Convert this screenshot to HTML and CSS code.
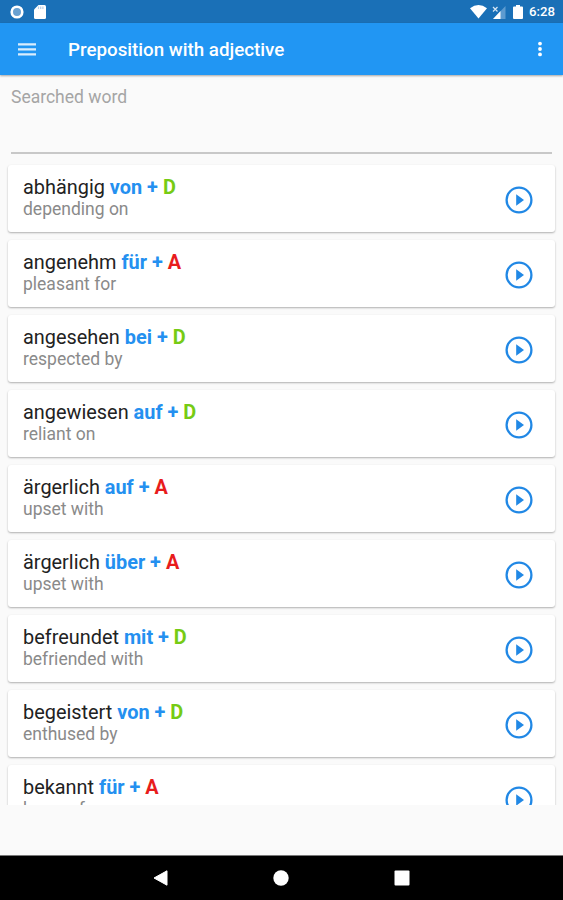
FILE: index.html
```html
<!DOCTYPE html>
<html lang="en">
  <head>
    <meta charset="UTF-8" />
    <meta name="viewport" content="width=device-width, initial-scale=1.0" />
    <title>Preposition with adjective</title>
    <link rel="stylesheet" href="styles.css" />
  </head>
  <body>
    <svg class="defs">
      <symbol id="play" viewBox="0 0 28 28">
        <circle cx="14" cy="14" r="12.4" fill="none" stroke="currentColor" stroke-width="2.3" />
        <path d="M11.2 8.3v11.4l7.8-5.7z" fill="currentColor" />
      </symbol>
    </svg>

    <!-- Status bar -->
    <div class="status-bar">
      <svg width="14" height="14" viewBox="0 0 14 14">
        <circle cx="7" cy="7" r="5.3" fill="#69a1d1" stroke="#fff" stroke-width="2.6" />
      </svg>
      <svg class="sd-card" width="12" height="14" viewBox="0 0 12 14">
        <path d="M4.5 0H10.5Q12 0 12 1.5V12.5Q12 14 10.5 14H1.5Q0 14 0 12.5V4.5z" fill="#fff" />
        <path d="M4.5 1.5v2.5M6.7 1.5v2.5M8.9 1.5v2.5" stroke="#b9cfe8" stroke-width="1.2" />
      </svg>
      <div class="status-right">
        <svg width="17" height="14" viewBox="0 0 17 14">
          <path d="M0 3.2Q8.5-3 17 3.2L8.5 13.5z" fill="#fff" />
        </svg>
        <svg class="signal" width="14" height="13" viewBox="0 0 14 13">
          <path d="M13.5 0v13H1z" fill="#5d9bd0" />
          <path d="M8.5 5v8H1z" fill="#fff" />
          <path d="M1 1l4.5 4.5M5.5 1L1 5.5" stroke="#d5e5f3" stroke-width="1.2" />
        </svg>
        <svg class="battery" width="10" height="14" viewBox="0 0 10 14">
          <path d="M3 0h4v1.5h2q1 0 1 1V13q0 1-1 1H1q-1 0-1-1V2.5q0-1 1-1h2z" fill="#fff" />
        </svg>
        <span class="time">6:28</span>
      </div>
    </div>

    <!-- App bar -->
    <div class="app-bar">
      <svg width="18" height="13" viewBox="0 0 18 13">
        <path d="M0 1.4h18M0 6.4h18M0 11.4h18" stroke="#d9edfd" stroke-width="2.3" />
      </svg>
      <h1>Preposition with adjective</h1>
      <svg class="more" width="4" height="16" viewBox="0 0 4 16">
        <g fill="#fff">
          <circle cx="2" cy="2.6" r="1.9" />
          <circle cx="2" cy="8" r="1.9" />
          <circle cx="2" cy="13.4" r="1.9" />
        </g>
      </svg>
    </div>

    <!-- Search -->
    <div class="search">Searched word</div>

    <!-- Words -->
    <div class="list">
      <div class="card">
        <div>
          <div class="word">abhängig <b>von + <span class="dativ">D</span></b></div>
          <div class="meaning">depending on</div>
        </div>
        <svg class="play"><use href="#play" /></svg>
      </div>
      <div class="card">
        <div>
          <div class="word">angenehm <b>für + <span class="akkusativ">A</span></b></div>
          <div class="meaning">pleasant for</div>
        </div>
        <svg class="play"><use href="#play" /></svg>
      </div>
      <div class="card">
        <div>
          <div class="word">angesehen <b>bei + <span class="dativ">D</span></b></div>
          <div class="meaning">respected by</div>
        </div>
        <svg class="play"><use href="#play" /></svg>
      </div>
      <div class="card">
        <div>
          <div class="word">angewiesen <b>auf + <span class="dativ">D</span></b></div>
          <div class="meaning">reliant on</div>
        </div>
        <svg class="play"><use href="#play" /></svg>
      </div>
      <div class="card">
        <div>
          <div class="word">ärgerlich <b>auf + <span class="akkusativ">A</span></b></div>
          <div class="meaning">upset with</div>
        </div>
        <svg class="play"><use href="#play" /></svg>
      </div>
      <div class="card">
        <div>
          <div class="word">ärgerlich <b>über + <span class="akkusativ">A</span></b></div>
          <div class="meaning">upset with</div>
        </div>
        <svg class="play"><use href="#play" /></svg>
      </div>
      <div class="card">
        <div>
          <div class="word">befreundet <b>mit + <span class="dativ">D</span></b></div>
          <div class="meaning">befriended with</div>
        </div>
        <svg class="play"><use href="#play" /></svg>
      </div>
      <div class="card">
        <div>
          <div class="word">begeistert <b>von + <span class="dativ">D</span></b></div>
          <div class="meaning">enthused by</div>
        </div>
        <svg class="play"><use href="#play" /></svg>
      </div>
      <div class="card">
        <div>
          <div class="word">bekannt <b>für + <span class="akkusativ">A</span></b></div>
          <div class="meaning">known for</div>
        </div>
        <svg class="play"><use href="#play" /></svg>
      </div>
    </div>

    <!-- Navigation bar -->
    <div class="nav-bar">
      <svg width="15" height="16" viewBox="0 0 15 16">
        <path d="M14 .8v14.4L1 8z" fill="#fff" stroke="#fff" stroke-linejoin="round" />
      </svg>
      <svg width="16" height="16" viewBox="0 0 16 16">
        <circle cx="8" cy="8" r="7.7" fill="#fff" />
      </svg>
      <svg width="16" height="16" viewBox="0 0 16 16">
        <rect x=".5" y=".5" width="15" height="15" rx="1" fill="#fff" />
      </svg>
    </div>
  </body>
</html>
```

FILE: styles.css
```css
* {
  box-sizing: border-box;
}

body {
  margin: 0;
  height: 900px;
  display: flex;
  flex-direction: column;
  overflow: hidden;
  font-family: Roboto, sans-serif;
  background: #fafafa;
}

svg {
  display: block;
  flex: none;
}

.defs {
  display: none;
}

.status-bar {
  height: 23px;
  flex: none;
  display: flex;
  align-items: center;
  padding: 1px 8px 0 10px;
  background: #1a70b7;
  color: #fff;
}

.sd-card {
  margin-left: 10px;
}

.status-right {
  margin-left: auto;
  display: flex;
  align-items: center;
}

.signal {
  margin-left: 5px;
}

.battery {
  margin-left: 7px;
}

.time {
  margin-left: 6px;
  font-size: 13.2px;
  font-weight: 500;
  line-height: 16px;
}

.app-bar {
  height: 52px;
  flex: none;
  display: flex;
  align-items: center;
  padding: 0 21px 0 18px;
  background: #2196f3;
  color: #fff;
  box-shadow: 0 1px 2px rgba(0, 0, 0, 0.35);
}

.app-bar h1 {
  margin: 0 0 0 32px;
  padding-top: 2px;
  font-size: 18.75px;
  font-weight: 500;
}

.app-bar .more {
  margin-left: auto;
}

.search {
  height: 79px;
  flex: none;
  margin: 0 11px;
  padding-top: 12px;
  border-bottom: 2px solid #c8c8c8;
  font-size: 17.5px;
  line-height: 20px;
  color: #a5a5a5;
}

.list {
  height: 651px;
  flex: none;
  padding: 11px 8px 0;
  overflow: hidden;
}

.card {
  height: 67px;
  margin-bottom: 8px;
  padding: 12px 22px 0 15px;
  display: flex;
  justify-content: space-between;
  background: #fff;
  border-radius: 3px;
  box-shadow: 0 1px 2px rgba(0, 0, 0, 0.3);
}

.word {
  font-size: 19.9px;
  line-height: 22px;
  color: #222;
}

.word b {
  font-weight: 700;
  color: #2490f0;
}

.word .dativ {
  color: #76cb14;
}

.word .akkusativ {
  color: #e81c1c;
}

.meaning {
  font-size: 17.5px;
  line-height: 21px;
  color: #8a8a8a;
}

.play {
  width: 28px;
  height: 28px;
  margin-top: 9px;
  color: #2188e5;
}

.nav-bar {
  height: 45px;
  flex: none;
  margin-top: auto;
  display: flex;
  align-items: center;
  justify-content: center;
  gap: 105px;
  border-top: 1px solid #777;
  background: #000;
}
```
